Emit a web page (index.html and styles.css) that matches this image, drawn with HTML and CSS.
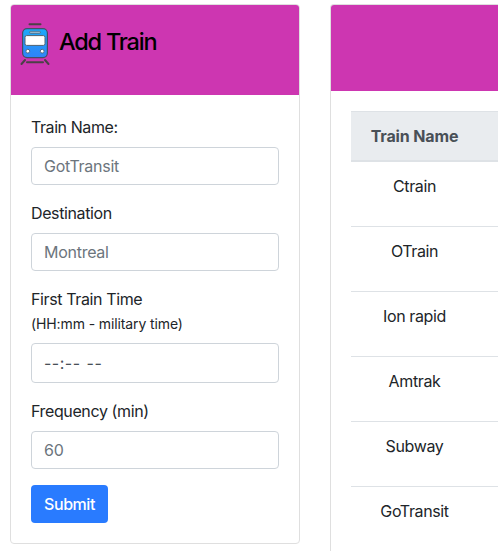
FILE: index.html
```html
<!DOCTYPE html>
<html lang="en">
<head>
<meta charset="utf-8">
<title>Train Schedule</title>
<link rel="stylesheet" href="styles.css">
</head>
<body>
<main class="layout">
  <section class="card form-card">
    <header class="card-header">
      <svg class="train" viewBox="0 0 30 44" width="30" height="44" aria-hidden="true">
        <defs><linearGradient id="paint" x1="0" y1="0" x2="0" y2="1"><stop offset="0" stop-color="#1caafa"/><stop offset="1" stop-color="#3083f8"/></linearGradient></defs>
        <g fill="none" stroke="#4b4047" stroke-width="2" stroke-linecap="round">
          <path d="M9.5 2.2h11M7 40.2h16M5 38l-3.5 4M25 38l3.5 4"/>
        </g>
        <rect x="2.6" y="6.6" width="24.8" height="29" rx="4.5" fill="url(#paint)" stroke="#454d66" stroke-width="1.2"/>
        <rect x="9.6" y="9.3" width="10.8" height="2" rx="1" fill="#a9c3d4" stroke="#48677f" stroke-width=".8"/>
        <rect x="5" y="13.6" width="20" height="9.8" rx="1.6" fill="#fff" stroke="#4e6170" stroke-width="1"/>
        <g fill="#fff" stroke="#4e6881" stroke-width="1"><circle cx="7.8" cy="29.2" r="1.9"/><circle cx="22.2" cy="29.2" r="1.9"/></g>
      </svg>
      <h1 class="title">Add Train</h1>
    </header>
    <form class="card-body">
      <div class="group">
        <label class="label name-label" for="name">Train Name:</label>
        <input class="control" id="name" type="text" placeholder="GotTransit">
      </div>
      <div class="group">
        <label class="label" for="dest">Destination</label>
        <input class="control" id="dest" type="text" placeholder="Montreal">
      </div>
      <div class="group">
        <label class="label" for="time">First Train Time<small class="hint">(HH:mm - military time)</small></label>
        <div class="control time" id="time"><span>--:--</span><span>--</span></div>
      </div>
      <div class="group">
        <label class="label" for="freq">Frequency (min)</label>
        <input class="control" id="freq" type="text" placeholder="60">
      </div>
      <button class="submit" type="button">Submit</button>
    </form>
  </section>
  <section class="card schedule-card">
    <header class="schedule-header"></header>
    <div class="card-body schedule-body">
      <table class="table">
        <thead><tr><th class="name-cell">Train Name</th><th></th></tr></thead>
        <tbody>
          <tr><td>Ctrain</td><td></td></tr>
          <tr><td>OTrain</td><td></td></tr>
          <tr><td>Ion rapid</td><td></td></tr>
          <tr><td>Amtrak</td><td></td></tr>
          <tr><td>Subway</td><td></td></tr>
          <tr><td>GoTransit</td><td></td></tr>
        </tbody>
      </table>
    </div>
  </section>
</main>
</body>
</html>
```

FILE: styles.css
```css
* { box-sizing: border-box; }
html { overflow: hidden; }
body {
  margin: 0;
  height: 551px;
  overflow: hidden;
  background: #fff;
  color: #212529;
  font: 16px/24px Inter, "Liberation Sans", sans-serif;
  letter-spacing: -0.38px;
}
.layout {
  display: flex;
  align-items: flex-start;
  gap: 30px;
  padding: 4px 0 0 10px;
}
.card {
  flex: none;
  border: 1px solid #dfdfdf;
  border-radius: 4px;
  background: #fff;
  overflow: hidden;
}
.form-card { width: 290px; }
.schedule-card {
  flex: 1;
  min-width: 0;
  border-right: 0;
  border-radius: 4px 0 0 4px;
}
.card-header {
  display: flex;
  align-items: flex-start;
  gap: 9px;
  height: 90px;
  padding: 17px 9px;
  background: #cd36b1;
}
.train { flex: none; }
.title {
  margin: 6px 0 0;
  color: #000;
  font-size: 23.5px;
  line-height: 28px;
  font-weight: 500;
  letter-spacing: -1.2px;
}
.schedule-header { height: 86px; background: #cd36b1; }
.card-body { padding: 20px; }
.schedule-body { padding-right: 0; }
.group { margin-bottom: 16px; }
.label { display: block; margin-bottom: 8px; }
.name-label { letter-spacing: -0.42px; }
.hint {
  display: block;
  height: 24px;
  font-size: 14px;
  line-height: 26px;
  letter-spacing: -0.11px;
}
.control {
  display: block;
  width: 100%;
  height: 38px;
  padding: 6px 12px;
  border: 1px solid #ced4da;
  border-radius: 4px;
  background: #fff;
  color: #495057;
  font: inherit;
  letter-spacing: -0.27px;
}
.control::placeholder { color: #6c757d; opacity: 1; }
.time {
  display: flex;
  gap: 6px;
  height: 40px;
  padding-top: 7px;
  letter-spacing: 0.5px;
}
.submit {
  display: block;
  width: 77px;
  height: 38px;
  padding: 0;
  border: 0;
  border-radius: 4px;
  background: #297bff;
  color: #fff;
  font: inherit;
  font-weight: 500;
  letter-spacing: -0.45px;
}
.table {
  width: 100%;
  table-layout: fixed;
  border-collapse: separate;
  border-spacing: 0;
  text-align: center;
}
.table th {
  height: 51px;
  padding: 12px;
  border-top: 1px solid #dee2e6;
  border-bottom: 2px solid #dee2e6;
  background: #e9ecef;
  color: #495057;
  font-weight: 700;
  letter-spacing: -0.15px;
}
.table .name-cell { width: 127px; }
.table td {
  height: 65px;
  padding: 12px 0 28px;
  border-bottom: 1px solid #dee2e6;
}
```
